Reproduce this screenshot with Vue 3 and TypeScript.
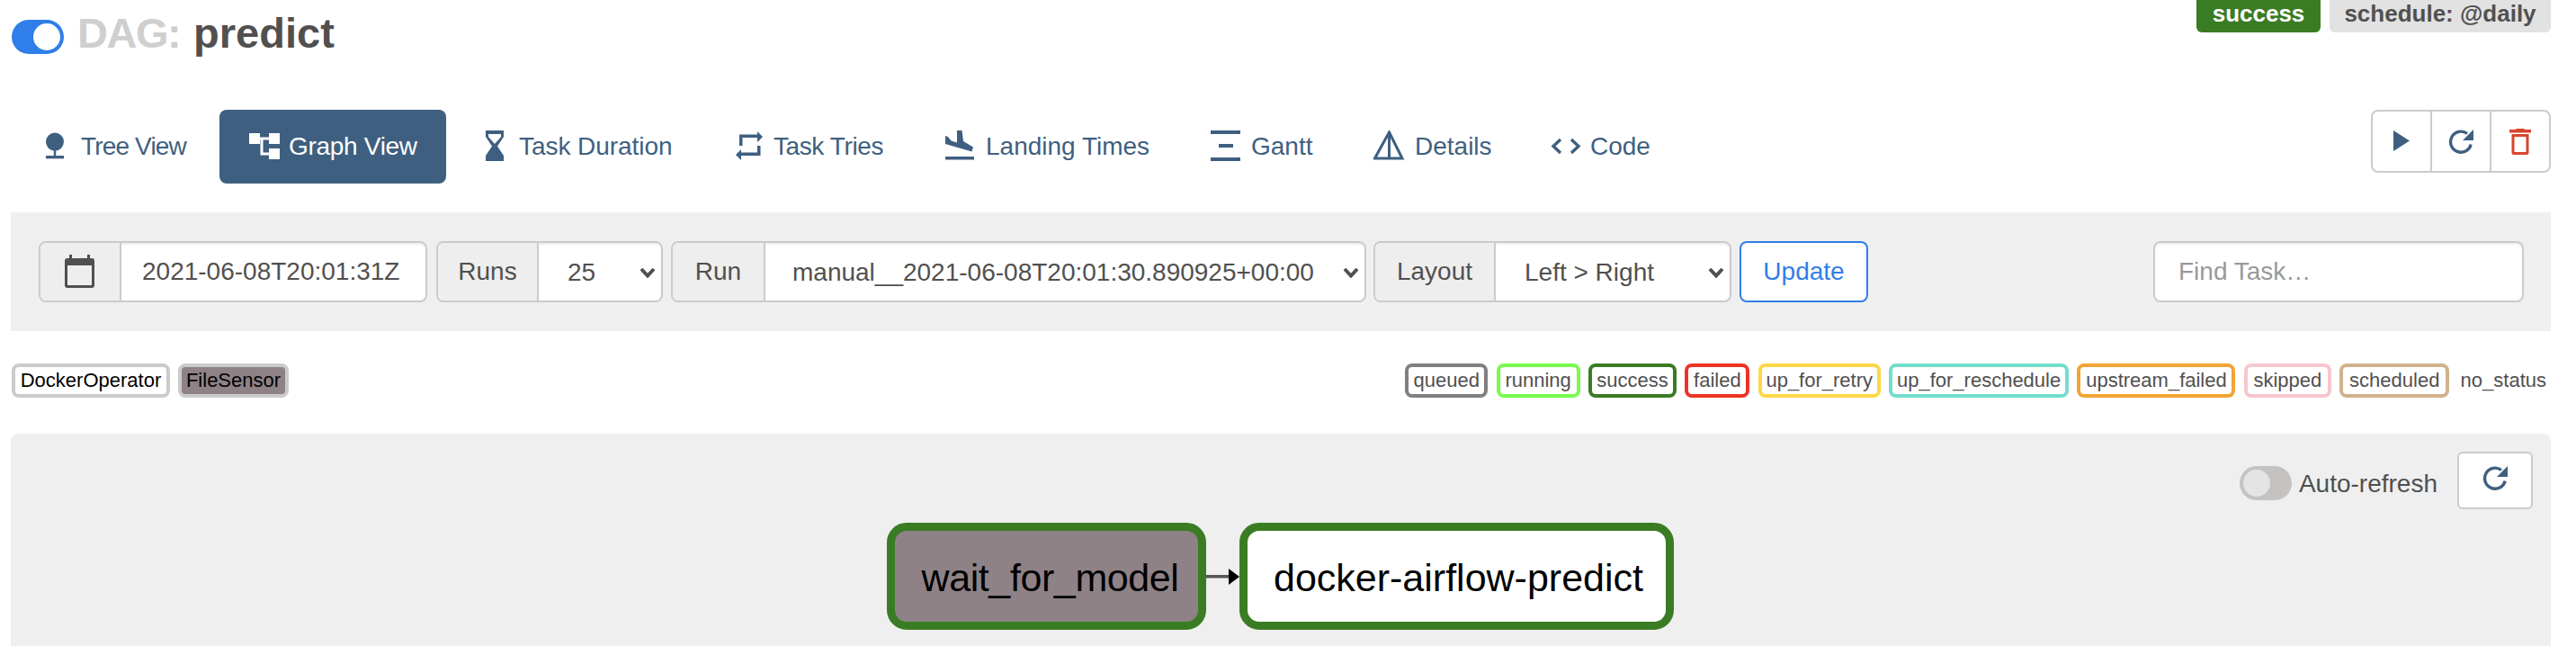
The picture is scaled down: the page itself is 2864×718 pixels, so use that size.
<script setup lang="ts">
interface Tab { label: string; key: string; w: number; ls: number; active?: boolean }
const tabs: Tab[] = [
  { label: 'Tree View', key: 'tree', w: 118, ls: -0.85 },
  { label: 'Graph View', key: 'graph', w: 143, ls: -0.3, active: true },
  { label: 'Task Duration', key: 'hourglass', w: 170, ls: -0.05 },
  { label: 'Task Tries', key: 'tries', w: 122, ls: -0.4 },
  { label: 'Landing Times', key: 'landing', w: 181, ls: 0 },
  { label: 'Gantt', key: 'gantt', w: 68, ls: 0 },
  { label: 'Details', key: 'details', w: 83, ls: 0 },
  { label: 'Code', key: 'code', w: 67, ls: 0 },
]
const statuses: { name: string; color: string; w: number }[] = [
  { name: 'queued', color: '#808080', w: 92 },
  { name: 'running', color: '#78fb4e', w: 93 },
  { name: 'success', color: '#3a7c23', w: 98 },
  { name: 'failed', color: '#ee3324', w: 72 },
  { name: 'up_for_retry', color: '#fdd745', w: 136 },
  { name: 'up_for_reschedule', color: '#73ddcd', w: 200 },
  { name: 'upstream_failed', color: '#f2a435', w: 176 },
  { name: 'skipped', color: '#f6c6ce', w: 97 },
  { name: 'scheduled', color: '#d0b28b', w: 122 },
]
</script>

<template>
  <div class="page">
    <header class="head">
      <h1 class="title">
        <span class="switch on"><span class="thumb"></span></span>
        <span class="dag">DAG:</span>
        <span class="name">predict</span>
      </h1>
      <div class="badges">
        <span class="badge ok">success</span>
        <span class="badge sched">schedule: @daily</span>
      </div>
    </header>

    <div class="navrow">
      <nav class="nav">
        <a v-for="t in tabs" :key="t.key" class="tab" :class="{ active: t.active }">
          <svg class="ico" :class="'ico-' + t.key" viewBox="0 0 36 36" width="36" height="36" fill="currentColor">
            <template v-if="t.key === 'tree'">
              <ellipse cx="12" cy="11.500" rx="12" ry="12" />
              <rect x="10.500" y="20" width="3" height="11" />
              <rect x="0" y="30" width="24" height="4" />
            </template>
            <template v-else-if="t.key === 'graph'">
              <rect x="1" y="3" width="12" height="12" />
              <rect x="23" y="3" width="12" height="12" />
              <rect x="23" y="20" width="12" height="12" />
              <path d="M13 7.500h10v3h-6.500v14H23v3h-9.500V10.500H13z" />
            </template>
            <template v-else-if="t.key === 'hourglass'">
              <path d="M8 0h20v7l-7 10.500 7 10.500v6H8v-6l7-10.500L8 7zM11 4v3l7 8 7-8V4z" fill-rule="evenodd" />
            </template>
            <template v-else-if="t.key === 'tries'">
              <path d="M7 4.500h20V1l6 6-6 6V8H10.500v9H7zM30.500 17v11H9v5l-6-6 6-6v3.500h18V17z" />
            </template>
            <template v-else-if="t.key === 'landing'">
              <path d="M14 0h5.500l1.500 12 11 6.500-1.500 5L1 15V6l3 1 3.500 4.500L14 13.500z" />
              <rect x="1" y="29" width="32" height="3.500" />
            </template>
            <template v-else-if="t.key === 'gantt'">
              <rect x="1" y="0" width="33" height="4" />
              <rect x="10" y="15" width="16" height="4" />
              <rect x="1" y="30" width="33" height="4" />
            </template>
            <template v-else-if="t.key === 'details'">
              <path d="M17.500 2 32 31H1.500z M17.500 2V31" fill="none" stroke="currentColor" stroke-width="3" />
            </template>
            <template v-else>
              <path d="M11 10 3 17.500 11 25M23 10 31 17.500 23 25" fill="none" stroke="currentColor" stroke-width="3.400" />
            </template>
          </svg>
          <span class="tab-text" :style="{ width: t.w + 'px', letterSpacing: t.ls + 'px' }">{{ t.label }}</span>
        </a>
      </nav>
      <div class="actions">
        <button class="act" type="button" aria-label="Run">
          <svg viewBox="0 0 18 24" width="18" height="24"><path d="M0 0 18 11.500 0 23z" fill="#3f5f80" /></svg>
        </button>
        <button class="act" type="button" aria-label="Refresh">
          <svg viewBox="0 0 28 28" width="28" height="28">
            <path d="M25.200 17.500A11.500 11.500 0 1 1 21 5.500" fill="none" stroke="#3f5f80" stroke-width="3.400" />
            <path d="M28 1v12H16z" fill="#3f5f80" />
          </svg>
        </button>
        <button class="act" type="button" aria-label="Delete">
          <svg viewBox="0 0 24 30" width="24" height="30" fill="#d8452e">
            <path d="M8 1h8l1.500 1H24v3.500H0V2h6.500z" />
            <path d="M2.500 7h19v20.500A2.500 2.500 0 0 1 19 30H5a2.500 2.500 0 0 1-2.500-2.500zM5.500 10v17h13V10z" fill-rule="evenodd" />
          </svg>
        </button>
      </div>
    </div>

    <form class="controls" @submit.prevent>
      <div class="group g-date">
        <span class="addon cal">
          <svg viewBox="0 0 34 38" width="34" height="38">
            <rect x="5" y="0" width="3" height="5" fill="#51504f" />
            <rect x="25" y="0" width="3" height="5" fill="#51504f" />
            <path d="M3 4h27a3 3 0 0 1 3 3v27a3 3 0 0 1-3 3H3a3 3 0 0 1-3-3V7a3 3 0 0 1 3-3zM3 12v22h27V12z" fill="#51504f" fill-rule="evenodd" />
          </svg>
        </span>
        <input class="field date" value="2021-06-08T20:01:31Z" readonly />
      </div>
      <div class="group g-runs">
        <span class="addon">Runs</span>
        <div class="pick">
          <select class="field"><option>25</option></select>
          <svg class="chev" viewBox="0 0 18 12" width="18" height="12"><path d="M2 2 9 9.500 16 2" fill="none" stroke="#51504f" stroke-width="4" /></svg>
        </div>
      </div>
      <div class="group g-run">
        <span class="addon">Run</span>
        <div class="pick">
          <select class="field"><option>manual__2021-06-08T20:01:30.890925+00:00</option></select>
          <svg class="chev" viewBox="0 0 18 12" width="18" height="12"><path d="M2 2 9 9.500 16 2" fill="none" stroke="#51504f" stroke-width="4" /></svg>
        </div>
      </div>
      <div class="group g-layout">
        <span class="addon">Layout</span>
        <div class="pick">
          <select class="field"><option>Left &gt; Right</option></select>
          <svg class="chev" viewBox="0 0 18 12" width="18" height="12"><path d="M2 2 9 9.500 16 2" fill="none" stroke="#51504f" stroke-width="4" /></svg>
        </div>
      </div>
      <button class="update" type="submit">Update</button>
      <input class="find" placeholder="Find Task…" />
    </form>

    <div class="legend">
      <div class="chips ops">
        <span class="chip op">DockerOperator</span>
        <span class="chip op sensor">FileSensor</span>
      </div>
      <div class="chips">
        <span v-for="s in statuses" :key="s.name" class="chip" :style="{ borderColor: s.color, width: s.w + 'px' }">{{ s.name }}</span>
        <span class="bare">no_status</span>
      </div>
    </div>

    <section class="graph">
      <div class="tools">
        <span class="switch off"><span class="thumb"></span></span>
        <span class="auto">Auto-refresh</span>
        <button class="reload" type="button" aria-label="Reload">
          <svg viewBox="0 0 28 28" width="28" height="28">
            <path d="M25.200 17.500A11.500 11.500 0 1 1 21 5.500" fill="none" stroke="#3f5f80" stroke-width="3.400" />
            <path d="M28 1v12H16z" fill="#3f5f80" />
          </svg>
        </button>
      </div>
      <div class="node wait">wait_for_model</div>
      <svg class="edge" viewBox="0 0 37 18" width="37" height="18">
        <rect x="0" y="7" width="26" height="3.500" fill="#555" />
        <path d="M25 0 37 9 25 18z" fill="#000" />
      </svg>
      <div class="node docker">docker-airflow-predict</div>
    </section>
  </div>
</template>

<style>
html, body { margin: 0; background: #fff; }
</style>

<style scoped>
.page {
  box-sizing: border-box;
  width: 2864px;
  height: 718px;
  padding: 0 28px 0 12px;
  display: flex;
  flex-direction: column;
  overflow: hidden;
  font-family: "Liberation Sans", Arial, sans-serif;
  font-size: 28px;
  color: #51504f;
}
.head {
  display: flex;
  justify-content: space-between;
  align-items: flex-start;
  height: 122px;
  flex: none;
}
.title {
  display: flex;
  align-items: center;
  gap: 13px;
  margin: 9px 0 0 1px;
  font-size: 47px;
  line-height: 56px;
  font-weight: bold;
}
.title .switch { margin: 8px 2px 0 0; }
.dag { color: #cfcfcf; letter-spacing: -1.5px; margin-right: 2px; }
.name { color: #51504f; }
.switch {
  box-sizing: border-box;
  display: inline-flex;
  align-items: center;
  width: 58px;
  height: 38px;
  padding: 4px;
  border-radius: 19px;
  flex: none;
}
.switch.on { background: #2f7eea; justify-content: flex-end; }
.switch.off { background: #c4c3c1; }
.thumb { width: 30px; height: 30px; border-radius: 50%; }
.on .thumb { background: #fff; }
.off .thumb { background: #e4e4e4; }
.badges { display: flex; gap: 10px; }
.badge {
  display: block;
  height: 36px;
  line-height: 30px;
  box-sizing: border-box;
  font-size: 26px;
  font-weight: bold;
  border-radius: 0 0 6px 6px;
  text-align: center;
}
.ok { width: 138px; background: #3a7c23; color: #fff; }
.sched { width: 246px; background: #e2e2e2; color: #51504f; }

.navrow {
  display: flex;
  justify-content: space-between;
  align-items: flex-start;
  height: 114px;
  flex: none;
}
.nav { display: flex; gap: 4px; margin-left: 7px; }
.tab {
  display: flex;
  align-items: center;
  height: 82px;
  padding: 0 32px;
  gap: 9px;
  border-radius: 8px;
  color: #3f5f80;
  white-space: nowrap;
}
.tab.active { background: #3f5f80; color: #fff; }
.tab-text { display: block; }
.ico { flex: none; }
.ico-tree { width: 30px; }
.ico-code { margin-right: -1px; }
.ico-landing, .ico-gantt, .ico-details { margin-right: 1px; }
.actions {
  box-sizing: border-box;
  display: flex;
  width: 200px;
  height: 70px;
  border: 2px solid #cbcbcb;
  border-radius: 8px;
  background: #fff;
}
.act {
  flex: 1;
  display: flex;
  align-items: center;
  justify-content: center;
  padding: 0;
  border: 0;
  border-left: 2px solid #cbcbcb;
  background: none;
}
.act:first-child { border-left: 0; }

.controls {
  box-sizing: border-box;
  display: flex;
  align-items: center;
  height: 132px;
  flex: none;
  padding: 0 30px 0 31px;
  background: #efefef;
}
.group {
  box-sizing: border-box;
  display: flex;
  height: 68px;
  border: 2px solid #cbcbcb;
  border-radius: 8px;
  overflow: hidden;
  background: #fff;
  box-shadow: inset 0 2px 2px rgba(0, 0, 0, 0.07);
}
.g-date { width: 432px; margin-right: 10px; }
.g-runs { width: 252px; margin-right: 9px; }
.g-run { width: 773px; margin-right: 8px; }
.g-layout { width: 398px; margin-right: 9px; }
.addon {
  box-sizing: border-box;
  display: flex;
  align-items: center;
  justify-content: center;
  flex: none;
  background: #eee;
  border-right: 2px solid #cbcbcb;
}
.g-date .addon { width: 90px; }
.g-runs .addon { width: 112px; }
.g-run .addon { width: 103px; }
.g-layout .addon { width: 134px; }
.field {
  box-sizing: border-box;
  width: 100%;
  height: 100%;
  border: 0;
  outline: 0;
  margin: 0;
  background: transparent;
  color: #51504f;
  font: inherit;
  appearance: none;
}
.date { padding: 0 0 0 23px; }
.pick { position: relative; flex: 1; min-width: 0; }
.pick .field { padding: 0 0 0 32px; }
.g-run .pick .field { padding-left: 30px; }
.chev { position: absolute; right: 6px; top: 27px; pointer-events: none; }
.update {
  box-sizing: border-box;
  width: 143px;
  height: 68px;
  padding: 0;
  border: 2px solid #2f7eea;
  border-radius: 8px;
  background: #fff;
  color: #2f7eea;
  font: inherit;
}
.find {
  box-sizing: border-box;
  width: 412px;
  height: 68px;
  margin-left: auto;
  padding: 0 26px;
  border: 2px solid #cbcbcb;
  border-radius: 8px;
  background: #fff;
  box-shadow: inset 0 2px 2px rgba(0, 0, 0, 0.07);
  color: #51504f;
  font: inherit;
  outline: 0;
}
.find::placeholder { color: #999; opacity: 1; }

.legend {
  display: flex;
  justify-content: space-between;
  height: 38px;
  margin: 36px 5px 40px 1px;
  flex: none;
}
.chips { display: flex; gap: 9.375px; align-items: center; }
.chips.ops { gap: 9px; }
.chip {
  box-sizing: border-box;
  height: 38px;
  border: 4px solid #ccc;
  border-radius: 8px;
  background: #fff;
  font-size: 22px;
  line-height: 30px;
  text-align: center;
  white-space: nowrap;
}
.chip.op { width: 176px; color: #000; border-color: #cbcbcb; }
.chip.sensor { width: 123px; background: #8e8287; }
.bare { font-size: 22px; margin-left: 3px; }

.graph {
  position: relative;
  flex: 1;
  min-height: 0;
  background: #efefef;
  border-radius: 8px 8px 0 0;
}
.tools {
  display: flex;
  justify-content: flex-end;
  align-items: flex-start;
  padding: 20px 20px 0 0;
}
.tools .switch { margin-top: 16px; margin-right: 8px; }
.auto { margin-top: 20px; margin-right: 22px; line-height: 32px; }
.reload {
  box-sizing: border-box;
  display: flex;
  align-items: center;
  justify-content: center;
  width: 84px;
  height: 64px;
  padding: 0 0 6px;
  border: 2px solid #cbcbcb;
  border-radius: 6px;
  background: #fff;
}
.node {
  position: absolute;
  top: 99px;
  box-sizing: border-box;
  height: 119px;
  padding-top: 4px;
  border: 9px solid #3a7c23;
  border-radius: 22px;
  display: flex;
  align-items: center;
  justify-content: center;
  color: #000;
  font-size: 43px;
  white-space: nowrap;
}
.wait { left: 974px; width: 355px; padding-left: 8px; letter-spacing: -0.4px; background: #8e8287; }
.docker { left: 1366px; width: 483px; padding-left: 4px; background: #fff; }
.edge { position: absolute; left: 1329px; top: 150px; }
</style>
